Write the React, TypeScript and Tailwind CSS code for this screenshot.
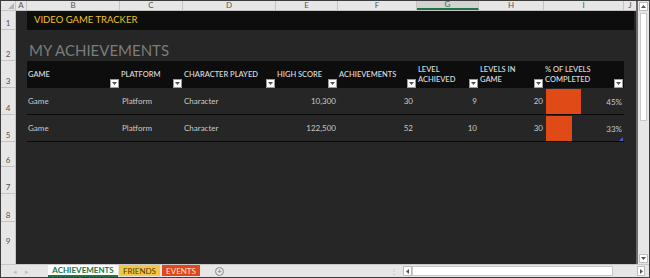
import React from "react"

const columns = [
  { key: "B", w: "w-[93px]", title: ["GAME"] },
  { key: "C", w: "w-[63px]", title: ["PLATFORM"] },
  { key: "D", w: "w-[93px]", title: ["CHARACTER PLAYED"] },
  { key: "E", w: "w-[62px]", title: ["HIGH SCORE"] },
  { key: "F", w: "w-[79px]", title: ["ACHIEVEMENTS"] },
  { key: "G", w: "w-[62px]", title: ["LEVEL", "ACHIEVED"] },
  { key: "H", w: "w-[65px]", title: ["LEVELS IN", "GAME"] },
  { key: "I", w: "w-[80px]", title: ["% OF LEVELS", "COMPLETED"] },
]

const games = [
  { game: "Game", platform: "Platform", character: "Character", score: "10,300", achievements: 30, achieved: 9, levels: 20, pct: 45 },
  { game: "Game", platform: "Platform", character: "Character", score: "122,500", achievements: 52, achieved: 10, levels: 30, pct: 33 },
]

// empty rows below the table: number + height
const emptyRows = [
  { n: 6, h: "h-[25px]" },
  { n: 7, h: "h-[27px]" },
  { n: 8, h: "h-[28px]" },
]

function RowHead({ n, className = "" }: { n: number; className?: string }) {
  return (
    <div className={`flex w-[15px] shrink-0 items-end justify-center border-r border-b border-[#c4c4c4] bg-[#e6e6e6] pb-[1px] text-[8px] leading-[10px] text-[#555] ${className}`}>
      {n}
    </div>
  )
}

function FilterBtn() {
  return (
    <div className="flex h-[9px] w-[9px] shrink-0 items-center justify-center self-end border border-[#9a9a9a] bg-white">
      <svg width="5" height="3" viewBox="0 0 5 3">
        <path d="M0 0h5L2.5 3z" fill="#505050" />
      </svg>
    </div>
  )
}

function ColumnHeaders() {
  return (
    <div className="flex h-[10px] shrink-0 border-b border-[#c4c4c4] bg-[#e6e6e6] text-[8px] leading-[9px] text-[#555]">
      <div className="flex w-[15px] items-end justify-end border-r border-[#c4c4c4] p-[1px]">
        <svg width="6" height="6" viewBox="0 0 6 6">
          <path d="M6 0v6H0z" fill="#b4b4b4" />
        </svg>
      </div>
      <div className="flex w-[11px] items-center justify-center border-r border-[#c4c4c4]">A</div>
      {columns.map((c) =>
        c.key === "G" ? (
          <div key={c.key} className={`${c.w} flex items-center justify-center border-r border-b-2 border-r-[#c4c4c4] border-b-[#217346] bg-[#d2d2d2] text-[#217346]`}>
            {c.key}
          </div>
        ) : (
          <div key={c.key} className={`${c.w} flex items-center justify-center border-r border-[#c4c4c4]`}>
            {c.key}
          </div>
        )
      )}
      <div className="flex w-[12px] items-center justify-center">J</div>
    </div>
  )
}

function TableHeader() {
  return (
    <div className="flex h-[27px] bg-[#0d0d0d]">
      {columns.map((c) => (
        <div key={c.key} className={`${c.w} flex items-stretch pr-[1px]`}>
          <div className="flex-1 self-center pl-[1px] text-[7.5px] font-semibold leading-[10px] text-[#d6d6d6]">
            {c.title.map((t) => (
              <div key={t}>{t}</div>
            ))}
          </div>
          <FilterBtn />
        </div>
      ))}
    </div>
  )
}

function DataRow({ row }: { row: (typeof games)[number] }) {
  return (
    <div className="flex h-[27px] border-b border-[#0a0a0a] text-[8px] text-[#c8c8c8]">
      <div className="flex w-[93px] items-center pl-[1px]">{row.game}</div>
      <div className="flex w-[63px] items-center pl-[2px]">{row.platform}</div>
      <div className="flex w-[93px] items-center pl-[1px]">{row.character}</div>
      <div className="flex w-[62px] items-center justify-end pr-[2px]">{row.score}</div>
      <div className="flex w-[79px] items-center justify-end pr-[4px] text-[#d8c8b6]">{row.achievements}</div>
      <div className="flex w-[62px] items-center justify-end pr-[2px] text-[#d8c8b6]">{row.achieved}</div>
      <div className="flex w-[65px] items-center justify-end pr-[1px]">{row.levels}</div>
      <div className="flex w-[80px] items-stretch pt-[1px] pl-[2px]">
        <div className="bg-[#df4a16]" style={{ width: `${(row.pct / 100) * 78}px` }} />
        <div className="ml-auto flex items-center pr-[2px]">{row.pct}%</div>
      </div>
    </div>
  )
}

function Sheet() {
  return (
    <div className="flex w-[635px] flex-col">
      <ColumnHeaders />

      {/* row 1 - banner */}
      <div className="flex h-[19px]">
        <RowHead n={1} />
        <div className="w-[11px] bg-[#262626]" />
        <div className="flex flex-1 items-center bg-[#262626] pr-[2px]">
          <div className="flex h-full flex-1 items-center bg-[#0d0d0d] pl-[7px] text-[9.5px] text-[#f0c22a]">
            VIDEO GAME TRACKER
          </div>
        </div>
      </div>

      {/* row 2 - title */}
      <div className="flex h-[31px]">
        <RowHead n={2} />
        <div className="w-[11px] bg-[#262626]" />
        <div className="flex flex-1 items-end bg-[#262626] pb-[2px] pl-[2px] text-[15px] leading-[18px] text-[#7c7c7c]">
          MY ACHIEVEMENTS
        </div>
      </div>

      {/* row 3 - table header */}
      <div className="flex h-[27px]">
        <RowHead n={3} />
        <div className="w-[11px] bg-[#262626]" />
        <TableHeader />
        <div className="w-[12px] bg-[#262626]" />
      </div>

      {games.map((g, i) => (
        <div key={i} className="flex h-[27px]">
          <RowHead n={i + 4} />
          <div className="w-[11px] bg-[#262626]" />
          <div className="relative bg-[#262626]">
            <DataRow row={g} />
            {/* table resize handle */}
            {i === games.length - 1 && (
              <svg className="absolute right-[1px] bottom-[1px]" width="4" height="4" viewBox="0 0 4 4">
                <path d="M4 0v4H0z" fill="#4a5ad0" />
              </svg>
            )}
          </div>
          <div className="w-[12px] bg-[#262626]" />
        </div>
      ))}

      {emptyRows.map((r) => (
        <div key={r.n} className={`flex ${r.h}`}>
          <RowHead n={r.n} />
          <div className="flex-1 bg-[#262626]" />
        </div>
      ))}

      <div className="flex flex-1 overflow-hidden">
        <div className="flex w-[15px] shrink-0 items-start justify-center border-r border-[#c4c4c4] bg-[#e6e6e6] pt-[14px] text-[8px] leading-[10px] text-[#555]">
          9
        </div>
        <div className="flex-1 bg-[#262626]" />
      </div>
    </div>
  )
}

function VScroll() {
  return (
    <div className="flex w-[13px] flex-col border-l-2 border-[#6a6a6a] bg-[#e6e6e6] px-[1px] py-[1px]">
      <div className="flex h-[9px] items-center justify-center border border-[#bdbdbd] bg-white">
        <svg width="5" height="3" viewBox="0 0 5 3">
          <path d="M0 3h5L2.5 0z" fill="#555" />
        </svg>
      </div>
      <div className="mx-[1px] mt-[2px] h-[108px] border border-[#c8c8c8] bg-white" />
      <div className="flex-1" />
      <div className="flex h-[9px] items-center justify-center border border-[#bdbdbd] bg-white">
        <svg width="5" height="3" viewBox="0 0 5 3">
          <path d="M0 0h5L2.5 3z" fill="#555" />
        </svg>
      </div>
    </div>
  )
}

function TabBar() {
  return (
    <div className="flex h-[13px] items-stretch border-t border-[#c8c8c8] bg-[#e6e6e6] text-[8px] leading-[10px]">
      <div className="flex w-[47px] items-center gap-[8px] pl-[12px] text-[7px] text-[#c0c0c0]">
        <span>◂</span>
        <span>▸</span>
      </div>
      <div className="flex w-[70px] items-center justify-center border-b-2 border-[#217346] bg-white font-bold text-[#217346]">
        ACHIEVEMENTS
      </div>
      <div className="ml-[1px] flex w-[41px] items-center justify-center border-b border-[#e6e6e6] bg-[#f2c744] text-[#4a3d12]">
        FRIENDS
      </div>
      <div className="ml-[2px] flex w-[38px] items-center justify-center border-b border-[#e6e6e6] bg-[#e0481a] text-[#fde3d6]">
        EVENTS
      </div>
      <div className="ml-[15px] flex items-center">
        <div className="flex h-[9px] w-[9px] items-center justify-center rounded-full border border-[#8a8a8a] text-[8px] leading-[8px] text-[#777]">
          +
        </div>
      </div>
      <div className="ml-[166px] flex items-center text-[8px] text-[#b0b0b0]">⋮</div>
      <div className="ml-[5px] flex w-[242px] items-center py-[1px]">
        <div className="flex h-[10px] w-[9px] items-center justify-center border border-[#bdbdbd] bg-white">
          <svg width="3" height="5" viewBox="0 0 3 5">
            <path d="M3 0v5L0 2.5z" fill="#555" />
          </svg>
        </div>
        <div className="h-[10px] w-[201px] border border-[#c8c8c8] bg-white" />
        <div className="flex-1" />
        <div className="flex h-[10px] w-[8px] items-center justify-center border border-[#bdbdbd] bg-white">
          <svg width="3" height="5" viewBox="0 0 3 5">
            <path d="M0 0v5L3 2.5z" fill="#555" />
          </svg>
        </div>
      </div>
    </div>
  )
}

export default function App() {
  return (
    <div className="flex h-[278px] w-[650px] flex-col overflow-hidden border border-[#3c3c3c] bg-[#e6e6e6] font-[Lato,'Liberation_Sans',sans-serif]">
      <div className="flex h-[263px]">
        <Sheet />
        <VScroll />
      </div>
      <TabBar />
    </div>
  )
}
